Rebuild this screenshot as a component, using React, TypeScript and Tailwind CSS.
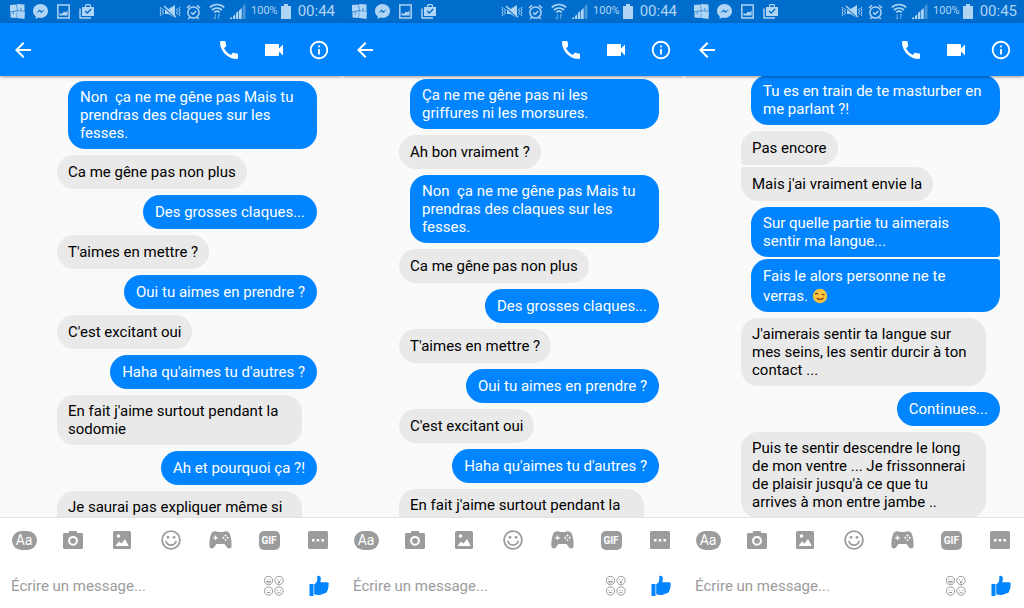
import type { ReactNode } from 'react'
import clsx from 'clsx'
import { MdArrowBack, MdCall, MdInfoOutline, MdVideocam } from 'react-icons/md'

interface Message {
  text: string
  mine?: boolean
  // Position inside a run of bubbles by the same sender
  group?: 'first' | 'last'
  emoji?: boolean
  // Runs on below the fold
  cut?: boolean
}

interface Phone {
  id: string
  time: string
  listClass: string
  messages: Message[]
}

const phones: Phone[] = [
  {
    id: 'a',
    time: '00:44',
    listClass: 'mt-[5px] pr-[25px]',
    messages: [
      { text: 'Non  ça ne me gêne pas Mais tu prendras des claques sur les fesses.', mine: true },
      { text: 'Ca me gêne pas non plus' },
      { text: 'Des grosses claques...', mine: true },
      { text: "T'aimes en mettre ?" },
      { text: 'Oui tu aimes en prendre ?', mine: true },
      { text: "C'est excitant oui" },
      { text: "Haha qu'aimes tu d'autres ?", mine: true },
      { text: "En fait j'aime surtout pendant la sodomie" },
      { text: 'Ah et pourquoi ça ?!', mine: true },
      { text: 'Je saurai pas expliquer même si', cut: true },
    ],
  },
  {
    id: 'b',
    time: '00:44',
    listClass: 'mt-[3px] pr-[25px]',
    messages: [
      { text: 'Ça ne me gêne pas ni les griffures ni les morsures.', mine: true },
      { text: 'Ah bon vraiment ?' },
      { text: 'Non  ça ne me gêne pas Mais tu prendras des claques sur les fesses.', mine: true },
      { text: 'Ca me gêne pas non plus' },
      { text: 'Des grosses claques...', mine: true },
      { text: "T'aimes en mettre ?" },
      { text: 'Oui tu aimes en prendre ?', mine: true },
      { text: "C'est excitant oui" },
      { text: "Haha qu'aimes tu d'autres ?", mine: true },
      { text: "En fait j'aime surtout pendant la sodomie" },
    ],
  },
  {
    id: 'c',
    time: '00:45',
    listClass: '-mt-px pr-6',
    messages: [
      { text: 'Tu es en train de te masturber en me parlant ?!', mine: true },
      { text: 'Pas encore', group: 'first' },
      { text: "Mais j'ai vraiment envie la", group: 'last' },
      { text: 'Sur quelle partie tu aimerais sentir ma langue...', mine: true, group: 'first' },
      { text: 'Fais le alors personne ne te verras. ', mine: true, group: 'last', emoji: true },
      { text: "J'aimerais sentir ta langue sur mes seins, les sentir durcir à ton contact ..." },
      { text: 'Continues...', mine: true },
      { text: "Puis te sentir descendre le long de mon ventre ... Je frissonnerai de plaisir jusqu'à ce que tu arrives à mon entre jambe .." },
    ],
  },
]

function StatusBar({ time }: { time: string }) {
  return (
    <div className="flex h-[23px] shrink-0 items-center justify-between bg-[#006dcc] pr-[7px] pl-[10px] text-[#b0d4f4]">
      <div className="flex items-center gap-2">
        <svg width="15" height="15" viewBox="0 0 15 15" fill="currentColor">
          <path d="M0 1l6.500-.5.500 6L0 7.200zM7 0l7.500.5V7L7.500 6.500zM.5 7.800L7 7.200l-.5 6.800-6-.5zM7.300 7l7.700.5-.5 7.500-7.500-1z" />
          <path d="M3.500 7.500l-.3 3M11 4v3" stroke="#006dcc" strokeWidth=".7" />
        </svg>
        <svg width="15" height="15" viewBox="0 0 15 15">
          <path d="M7.500 0C3.300 0 0 3 0 6.900c0 2.200 1 4.100 2.700 5.400V15l2.500-1.400c.7.2 1.500.3 2.300.3 4.200 0 7.500-3 7.500-7S11.700 0 7.500 0z" fill="currentColor" />
          <path d="M3 9.200l3.600-3.700L8.500 7.300 12 5.200 8.400 9 6.500 7.200z" fill="#006dcc" />
        </svg>
        <svg width="15" height="15" viewBox="0 0 15 15">
          <path d="M1.800 1h11.400v13H1.800z" fill="none" stroke="currentColor" strokeWidth="1.500" />
          <path d="M3.500 11.500V9l2.200 1 2.300-2.500L9.600 8.500l2-2v5z" fill="currentColor" />
        </svg>
        <svg width="15" height="15" viewBox="0 0 15 15">
          <path d="M1 4.500V14h11" fill="none" stroke="currentColor" strokeWidth="1.400" />
          <path d="M3 3h3V1.500C6 .7 6.700 0 7.500 0h3c.8 0 1.500.7 1.500 1.500V3h3v9H3zM7.200 3h3.600V1.300H7.200z" fill="currentColor" fillRule="evenodd" />
          <path d="M6.200 7l2 2 4-4" fill="none" stroke="#006dcc" strokeWidth="1.400" />
        </svg>
      </div>
      <div className="flex items-center">
        <svg width="22" height="15" viewBox="0 0 22 15" fill="none" stroke="currentColor">
          <path d="M1 3l1 1.500L1 6l1 1.500L1 9l1 1.500L1 12M3.500 4.500l1 1.500-1 1.500 1 1.500-1 1.500M21 3l-1 1.500L21 6l-1 1.500L21 9l-1 1.500 1 1.500M18.500 4.500l-1 1.500 1 1.500-1 1.500 1 1.500" />
          <path d="M6 5h3.500L16 1v13L9.500 10H6z" fill="currentColor" stroke="none" />
          <path d="M5 3.300l11.500 10.500" stroke="#006dcc" strokeWidth="1.500" />
          <path d="M5 2l12 11" strokeWidth="1.500" />
        </svg>
        <svg className="ml-[5px]" width="15" height="16" viewBox="0 0 15 16" fill="none" stroke="currentColor" strokeWidth="1.500">
          <circle cx="7.500" cy="8.500" r="5.600" />
          <path d="M5 8.500l2 1.800L10.300 7M1 4l3-2.800M14 4l-3-2.800M3.500 13.500L2.300 15M11.500 13.500l1.200 1.500" />
        </svg>
        <svg className="ml-2" width="16" height="17" viewBox="0 0 16 17" fill="none" stroke="currentColor" strokeWidth="1.700">
          <path d="M.8 4.500c4-4 10.400-4 14.400 0M3 7c3-2.700 7-2.700 10 0M5.300 9.300c1.700-1.400 3.700-1.400 5.400 0" />
          <path d="M6.300 11v5M4.800 14.500L6.300 16M9.700 16v-5M11.200 12.500L9.700 11" strokeWidth="1" opacity=".6" />
        </svg>
        <svg className="ml-[5px]" width="16" height="15" viewBox="0 0 16 15" fill="currentColor">
          <path d="M0 15v-1l2-1v2zM3 15v-3l2.200-1.500V15zM6 15V9l2.300-2v8zM9 15V6.500L11.700 4v11z" />
          <path d="M12.500 15V2.500L15.500 0v15z" opacity=".4" />
        </svg>
        <span className="ml-[5px] text-[11px]">100%</span>
        <svg className="ml-[3px]" width="10" height="15" viewBox="0 0 10 15" fill="currentColor">
          <path d="M3 0h4v2h3v13H0V2h3z" />
        </svg>
        <span className="ml-[7px] text-[15px]">{time}</span>
      </div>
    </div>
  )
}

function IconButton({ label, className, children }: { label: string; className?: string; children: ReactNode }) {
  return (
    <button type="button" aria-label={label} className={clsx('flex h-6 items-center justify-center', className)}>
      {children}
    </button>
  )
}

function Header() {
  return (
    <header className="relative z-10 flex h-[53px] shrink-0 items-center justify-between bg-[#0084ff] pr-[11px] pl-[11px] text-white shadow-[0_1px_3px_rgba(0,0,0,0.4)]">
      <IconButton label="Retour" className="w-6">
        <MdArrowBack size={24} />
      </IconButton>
      <div className="flex items-center gap-[21px]">
        <IconButton label="Appeler" className="w-6">
          <MdCall size={24} />
        </IconButton>
        <IconButton label="Appel vidéo" className="w-6">
          <MdVideocam size={24} />
        </IconButton>
        <IconButton label="Informations" className="w-6">
          <MdInfoOutline size={22} />
        </IconButton>
      </div>
    </header>
  )
}

function WinkFace() {
  return (
    <svg className="mt-[3px] inline-block align-[-3px]" width="16" height="16" viewBox="0 0 16 16" role="img" aria-label="clin d'œil">
      <circle cx="8" cy="8" r="7.200" fill="#fcc43c" />
      <path d="M3.300 6.300c.8-1.200 2-1.200 2.800 0M9.500 6.500l3 .2" stroke="#6b4a1b" strokeWidth="1.200" fill="none" />
      <path d="M5 10c1.600 2.200 4.800 2.200 6.400-.3" stroke="#8b4a1b" strokeWidth="1.500" fill="none" />
    </svg>
  )
}

function Bubble({ message }: { message: Message }) {
  const { text, mine, group, emoji, cut } = message

  return (
    <li
      className={clsx(
        'flex rounded-[17px] py-[7px] text-[15px] leading-[18px] whitespace-pre-wrap',
        mine ? 'max-w-[249px] self-end bg-[#0084ff] px-3 text-white' : 'max-w-[245px] self-start bg-[#e9e9e9] px-[11px] text-black',
        cut ? 'h-[68px] w-full items-start' : 'items-center',
        group === 'last' ? 'mt-[2px]' : 'mt-[6px] first:mt-0',
        group === 'first' && (mine ? 'rounded-br-[3px]' : 'rounded-bl-[3px]'),
        group === 'last' && (mine ? 'rounded-tr-[3px]' : 'rounded-tl-[3px]'),
        emoji ? 'min-h-[53px]' : 'min-h-[34px]',
      )}
    >
      <p>
        {text}
        {emoji && <WinkFace />}
      </p>
    </li>
  )
}

/* One of the four little faces of the sticker button */
function Face({ x, y, mouth }: { x: number; y: number; mouth: string }) {
  return (
    <g transform={`translate(${x} ${y})`}>
      <circle cx="4.500" cy="4.500" r="4.200" />
      <path d="M2.500 3.700h1M5.500 3.700h1" />
      <path d={mouth} />
    </g>
  )
}

function Composer() {
  return (
    <footer className="shrink-0 border-t border-[#e2e2e2] bg-white pb-2">
      <div className="flex h-11 items-center justify-between px-[11px] text-[#9c9c9c]">
        <IconButton label="Texte" className="w-[26px]">
          <span className="flex h-[19px] w-[25px] items-center justify-center rounded-full bg-[#9c9c9c] text-[14px] leading-[19px] text-white">
            Aa
          </span>
        </IconButton>
        <IconButton label="Appareil photo" className="w-[26px]">
          <svg width="20" height="18" viewBox="0 0 20 18">
            <path d="M5.500 2l1-2h7l1 2h4c.8 0 1.500.7 1.500 1.500v13c0 .8-.7 1.500-1.500 1.500h-17C.7 18 0 17.300 0 16.500v-13C0 2.700.7 2 1.500 2z" fill="currentColor" />
            <circle cx="10" cy="9.800" r="3.900" fill="none" stroke="#fff" strokeWidth="2" />
          </svg>
        </IconButton>
        <IconButton label="Galerie" className="w-[26px]">
          <svg width="18" height="18" viewBox="0 0 18 18">
            <rect width="18" height="18" rx="1.500" fill="currentColor" />
            <circle cx="5.500" cy="5" r="1.800" fill="#fff" />
            <path d="M2.500 15l3.500-4.500 2.500 2L12 8l3.700 7z" fill="#fff" />
          </svg>
        </IconButton>
        <IconButton label="Émoticônes" className="w-[26px]">
          <svg width="20" height="20" viewBox="0 0 20 20" fill="none" stroke="currentColor" strokeWidth="1.800">
            <circle cx="10" cy="10" r="8.900" />
            <path d="M5 11.500c1.500 4.700 8.500 4.700 10 0" strokeLinecap="round" />
            <circle cx="7" cy="7.300" r="1.400" fill="currentColor" stroke="none" />
            <circle cx="13" cy="7.300" r="1.400" fill="currentColor" stroke="none" />
          </svg>
        </IconButton>
        <IconButton label="Jeux" className="w-[26px]">
          <svg width="23" height="18" viewBox="0 0 23 18">
            <path d="M3 1.500C5 0 7.500 0 9 1h5c1.500-1 4-1 6 .5C21.700 4 23 10 22.500 15.500c-.2 2-2.700 2.500-4.200 1.300L15.500 13h-8l-2.800 3.800C3.200 18 .7 17.500.5 15.500 0 10 1.300 4 3 1.500z" fill="currentColor" />
            <path d="M4.200 6.800h4.600M6.500 4.500v4.600" stroke="#fff" strokeWidth="1.300" />
            <path d="M16.500 3.300l1.200 1.200-1.200 1.200-1.200-1.200zM16.500 7.700l1.200 1.200-1.200 1.200-1.200-1.200zM14.300 5.500l1.200 1.200-1.200 1.200-1.200-1.200zM18.700 5.500l1.200 1.200-1.200 1.200-1.200-1.200z" fill="#fff" />
          </svg>
        </IconButton>
        <IconButton label="GIF animés" className="w-[26px]">
          <span className="flex h-[19px] w-[21px] items-center justify-center rounded-[5px] bg-[#9c9c9c] text-[10px] leading-[19px] font-bold text-white">
            GIF
          </span>
        </IconButton>
        <IconButton label="Plus" className="w-[26px]">
          <svg width="20" height="18" viewBox="0 0 20 18">
            <rect width="20" height="18" rx="1.500" fill="currentColor" />
            <path d="M4 8h2.500v2.500H4zM8.700 8h2.500v2.500H8.700zM13.500 8H16v2.500h-2.500z" fill="#fff" />
          </svg>
        </IconButton>
      </div>
      <form className="mt-[9px] flex h-[29px] items-center pr-[13px] pl-[11px]">
        <input
          type="text"
          aria-label="Message"
          placeholder="Écrire un message..."
          className="min-w-0 flex-1 bg-transparent text-[15px] leading-5 outline-none placeholder:text-[#9c9c9c]"
        />
        <IconButton label="Autocollants" className="w-5">
          <svg width="20" height="20" viewBox="0 0 20 20" fill="none" stroke="#9c9c9c" strokeWidth="1">
            <Face x={0} y={0} mouth="M2.300 5.500h4.400c-.3 2-4.100 2-4.400 0z" />
            <Face x={10.5} y={0} mouth="M3.800 5.500h1.400V7H3.800z" />
            <Face x={0} y={10.5} mouth="M2.800 6h3.400" />
            <Face x={10.5} y={10.5} mouth="M2.800 6.500c.8-.9 2.600-.9 3.400 0" />
          </svg>
        </IconButton>
        <IconButton label="J'aime" className="ml-[25px] w-5">
          <svg width="20" height="22" viewBox="0 0 20 22" fill="#0084ff">
            <path d="M.5 9h4v12h-4z" />
            <path d="M5.200 9.500C7.500 8 8.300 6 8.300 4V1.500C8.300.3 11.600.2 11.800 3c.1 1.500-.2 3-.6 4.200h7c1.500 0 2.100 1.900 1 2.800.8.800.7 2.200-.3 2.800.5 1 .2 2.200-.8 2.700.3 1.200-.3 2.300-1.600 2.600L11 20c-2 .3-4-.2-5.800-.7z" />
          </svg>
        </IconButton>
      </form>
    </footer>
  )
}

export default function App() {
  return (
    <div className="grid h-screen grid-cols-[342fr_342fr_340fr] bg-[#fafafa] font-[Roboto,'Liberation_Sans',sans-serif]">
      {phones.map((phone) => (
        <section key={phone.id} className="flex h-screen min-w-0 flex-col overflow-hidden">
          <StatusBar time={phone.time} />
          <Header />
          <main className="min-h-0 flex-1 overflow-hidden">
            <ul className={clsx('flex flex-col pl-[57px]', phone.listClass)}>
              {phone.messages.map((message, i) => (
                <Bubble key={i} message={message} />
              ))}
            </ul>
          </main>
          <Composer />
        </section>
      ))}
    </div>
  )
}
